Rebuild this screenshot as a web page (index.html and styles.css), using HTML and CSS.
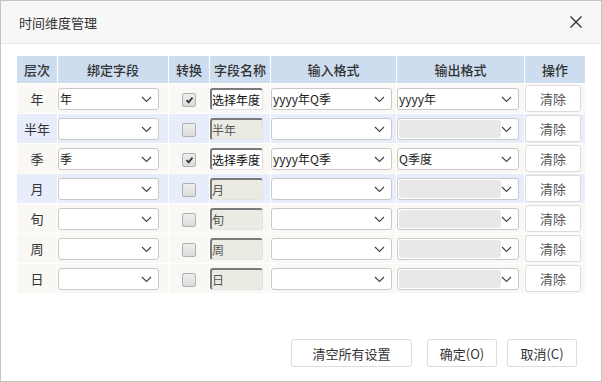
FILE: index.html
```html
<!DOCTYPE html>
<html>
<head>
    <meta charset="utf-8">
    <link rel="stylesheet" href="styles.css">
</head>
<body>
    <div class="dialog">
        <div class="dialog-header">
            <span class="dialog-title">时间维度管理</span>
            <span class="close-btn">
                <svg width="14" height="14" viewBox="0 0 14 14"><path d="M1.5 1.5L12.5 12.5M12.5 1.5L1.5 12.5" stroke="#333" stroke-width="1.4" fill="none"/></svg>
            </span>
        </div>
        <div class="dialog-body">
            <table class="dim-table">
                <colgroup>
                    <col style="width:40px"><col style="width:110px"><col style="width:40px"><col style="width:60px"><col style="width:125px"><col style="width:127px"><col style="width:60px">
                </colgroup>
                <thead>
                    <tr><th>层次</th><th>绑定字段</th><th>转换</th><th>字段名称</th><th>输入格式</th><th>输出格式</th><th>操作</th></tr>
                </thead>
                <tbody>
                    <tr class="row-plain">
                        <td class="level">年</td>
                        <td><div class="select bind"><span class="select-value">年</span><svg class="arrow" width="11" height="7" viewBox="0 0 11 7"><path d="M1 1l4.5 4.5L10 1"/></svg></div></td>
                        <td class="check-cell"><span class="checkbox checked"><svg width="9" height="8" viewBox="0 0 9 8"><path d="M1.5 4.2l2.2 2.2L7.5 1.5"/></svg></span></td>
                        <td><div class="name-input">选择年度</div></td>
                        <td><div class="select fmt-in"><span class="select-value">yyyy年Q季</span><svg class="arrow" width="11" height="7" viewBox="0 0 11 7"><path d="M1 1l4.5 4.5L10 1"/></svg></div></td>
                        <td><div class="select fmt-out"><span class="select-value">yyyy年</span><svg class="arrow" width="11" height="7" viewBox="0 0 11 7"><path d="M1 1l4.5 4.5L10 1"/></svg></div></td>
                        <td><button class="btn clear-btn">清除</button></td>
                    </tr>
                    <tr class="row-hl">
                        <td class="level">半年</td>
                        <td><div class="select bind"><span class="select-value"></span><svg class="arrow" width="11" height="7" viewBox="0 0 11 7"><path d="M1 1l4.5 4.5L10 1"/></svg></div></td>
                        <td class="check-cell"><span class="checkbox"></span></td>
                        <td><div class="name-input disabled">半年</div></td>
                        <td><div class="select fmt-in"><span class="select-value"></span><svg class="arrow" width="11" height="7" viewBox="0 0 11 7"><path d="M1 1l4.5 4.5L10 1"/></svg></div></td>
                        <td><div class="select fmt-out disabled"><span class="select-fill"></span><svg class="arrow" width="11" height="7" viewBox="0 0 11 7"><path d="M1 1l4.5 4.5L10 1"/></svg></div></td>
                        <td><button class="btn clear-btn">清除</button></td>
                    </tr>
                    <tr class="row-plain">
                        <td class="level">季</td>
                        <td><div class="select bind"><span class="select-value">季</span><svg class="arrow" width="11" height="7" viewBox="0 0 11 7"><path d="M1 1l4.5 4.5L10 1"/></svg></div></td>
                        <td class="check-cell"><span class="checkbox checked"><svg width="9" height="8" viewBox="0 0 9 8"><path d="M1.5 4.2l2.2 2.2L7.5 1.5"/></svg></span></td>
                        <td><div class="name-input">选择季度</div></td>
                        <td><div class="select fmt-in"><span class="select-value">yyyy年Q季</span><svg class="arrow" width="11" height="7" viewBox="0 0 11 7"><path d="M1 1l4.5 4.5L10 1"/></svg></div></td>
                        <td><div class="select fmt-out"><span class="select-value">Q季度</span><svg class="arrow" width="11" height="7" viewBox="0 0 11 7"><path d="M1 1l4.5 4.5L10 1"/></svg></div></td>
                        <td><button class="btn clear-btn">清除</button></td>
                    </tr>
                    <tr class="row-hl">
                        <td class="level">月</td>
                        <td><div class="select bind"><span class="select-value"></span><svg class="arrow" width="11" height="7" viewBox="0 0 11 7"><path d="M1 1l4.5 4.5L10 1"/></svg></div></td>
                        <td class="check-cell"><span class="checkbox"></span></td>
                        <td><div class="name-input disabled">月</div></td>
                        <td><div class="select fmt-in"><span class="select-value"></span><svg class="arrow" width="11" height="7" viewBox="0 0 11 7"><path d="M1 1l4.5 4.5L10 1"/></svg></div></td>
                        <td><div class="select fmt-out disabled"><span class="select-fill"></span><svg class="arrow" width="11" height="7" viewBox="0 0 11 7"><path d="M1 1l4.5 4.5L10 1"/></svg></div></td>
                        <td><button class="btn clear-btn">清除</button></td>
                    </tr>
                    <tr class="row-plain">
                        <td class="level">旬</td>
                        <td><div class="select bind"><span class="select-value"></span><svg class="arrow" width="11" height="7" viewBox="0 0 11 7"><path d="M1 1l4.5 4.5L10 1"/></svg></div></td>
                        <td class="check-cell"><span class="checkbox"></span></td>
                        <td><div class="name-input disabled">旬</div></td>
                        <td><div class="select fmt-in"><span class="select-value"></span><svg class="arrow" width="11" height="7" viewBox="0 0 11 7"><path d="M1 1l4.5 4.5L10 1"/></svg></div></td>
                        <td><div class="select fmt-out disabled"><span class="select-fill"></span><svg class="arrow" width="11" height="7" viewBox="0 0 11 7"><path d="M1 1l4.5 4.5L10 1"/></svg></div></td>
                        <td><button class="btn clear-btn">清除</button></td>
                    </tr>
                    <tr class="row-plain">
                        <td class="level">周</td>
                        <td><div class="select bind"><span class="select-value"></span><svg class="arrow" width="11" height="7" viewBox="0 0 11 7"><path d="M1 1l4.5 4.5L10 1"/></svg></div></td>
                        <td class="check-cell"><span class="checkbox"></span></td>
                        <td><div class="name-input disabled">周</div></td>
                        <td><div class="select fmt-in"><span class="select-value"></span><svg class="arrow" width="11" height="7" viewBox="0 0 11 7"><path d="M1 1l4.5 4.5L10 1"/></svg></div></td>
                        <td><div class="select fmt-out disabled"><span class="select-fill"></span><svg class="arrow" width="11" height="7" viewBox="0 0 11 7"><path d="M1 1l4.5 4.5L10 1"/></svg></div></td>
                        <td><button class="btn clear-btn">清除</button></td>
                    </tr>
                    <tr class="row-plain">
                        <td class="level">日</td>
                        <td><div class="select bind"><span class="select-value"></span><svg class="arrow" width="11" height="7" viewBox="0 0 11 7"><path d="M1 1l4.5 4.5L10 1"/></svg></div></td>
                        <td class="check-cell"><span class="checkbox"></span></td>
                        <td><div class="name-input disabled">日</div></td>
                        <td><div class="select fmt-in"><span class="select-value"></span><svg class="arrow" width="11" height="7" viewBox="0 0 11 7"><path d="M1 1l4.5 4.5L10 1"/></svg></div></td>
                        <td><div class="select fmt-out disabled"><span class="select-fill"></span><svg class="arrow" width="11" height="7" viewBox="0 0 11 7"><path d="M1 1l4.5 4.5L10 1"/></svg></div></td>
                        <td><button class="btn clear-btn">清除</button></td>
                    </tr>
                </tbody>
            </table>
        </div>
        <div class="dialog-footer">
            <button class="btn footer-btn reset-btn">清空所有设置</button>
            <button class="btn footer-btn ok-btn">确定(O)</button>
            <button class="btn footer-btn">取消(C)</button>
        </div>
    </div>
</body>
</html>
```

FILE: styles.css
```css
body {
    margin: 0;
    font-family: "Noto Sans CJK SC", "Noto Sans", sans-serif;
    font-size: 13px;
    color: #333;
    background-color: #fff;
}
.dialog {
    width: 602px;
    height: 382px;
    box-sizing: border-box;
    border: 1px solid #c4c4c4;
    display: flex;
    flex-direction: column;
}
.dialog-header {
    height: 42px;
    background-color: #f7f7f7;
    border-bottom: 1px solid #e6e6e6;
    display: flex;
    align-items: center;
    justify-content: space-between;
    padding: 0 18px 0 18px;
}
.dialog-title {
    font-size: 13px;
    color: #333;
}
.close-btn {
    display: flex;
    align-items: center;
}
.dialog-body {
    padding: 11px 15px 0 15px;
}
.dim-table {
    table-layout: fixed;
    border-collapse: separate;
    border-spacing: 1px;
    width: 570px;
}
.dim-table th {
    height: 27px;
    padding: 0;
    background-color: #cddcef;
    font-weight: 500;
    font-size: 13px;
    color: #333;
    text-align: center;
}
.dim-table td {
    height: 29px;
    padding: 0;
    text-align: left;
    vertical-align: middle;
}
.row-plain td {
    background-color: #f9f8f4;
}
.row-hl td {
    background-color: #e8edfc;
}
.dim-table td.level,
.dim-table td.check-cell {
    text-align: center;
}
.select {
    position: relative;
    height: 22px;
    box-sizing: border-box;
    border: 1px solid #c9c9c9;
    border-radius: 3px;
    background-color: #fff;
    display: flex;
    align-items: center;
}
.select.bind {
    width: 101px;
}
.select.fmt-in {
    width: 121px;
}
.select.fmt-out {
    width: 122px;
}
.select-value {
    flex: 1;
    padding-left: 1px;
    font-size: 12px;
    color: #222;
    white-space: nowrap;
}
.select-fill {
    flex: 1;
    align-self: stretch;
    margin: 1px 17px 1px 1px;
    background-color: #e8e8e8;
    border-radius: 3px;
}
.arrow {
    position: absolute;
    right: 6px;
    top: 7px;
}
.arrow path {
    fill: none;
    stroke: #444;
    stroke-width: 1.1;
}
.checkbox {
    display: inline-flex;
    align-items: center;
    justify-content: center;
    width: 12px;
    height: 12px;
    border: 1px solid #b0b0b0;
    border-radius: 2px;
    background: linear-gradient(#eeeeee, #dcdcdc);
    vertical-align: middle;
}
.checkbox path {
    fill: none;
    stroke: #333;
    stroke-width: 1.8;
}
.name-input {
    width: 53px;
    height: 22px;
    box-sizing: border-box;
    border-top: 2px solid #7a7a7a;
    border-left: 2px solid #7a7a7a;
    border-right: 1px solid #e2e2e2;
    border-bottom: 1px solid #e2e2e2;
    border-radius: 3px;
    background-color: #fff;
    font-size: 12px;
    line-height: 19px;
    color: #111;
    white-space: nowrap;
    overflow: hidden;
}
.name-input.disabled {
    background-color: #ebebe4;
    color: #555;
}
.btn {
    font-family: "Noto Sans CJK SC", "Noto Sans", sans-serif;
    font-size: 13px;
    color: #555;
    background-color: #fff;
    border: 1px solid #dcdcdc;
    border-radius: 3px;
    padding: 0;
    cursor: pointer;
}
.clear-btn {
    width: 56px;
    height: 27px;
    display: block;
}
.dialog-footer {
    margin-top: auto;
    display: flex;
    justify-content: flex-end;
    gap: 10px;
    padding: 0 24px 14px 0;
}
.footer-btn {
    height: 28px;
    width: 70px;
    color: #333;
}
.reset-btn {
    width: 121px;
    margin-right: 5px;
}
```
